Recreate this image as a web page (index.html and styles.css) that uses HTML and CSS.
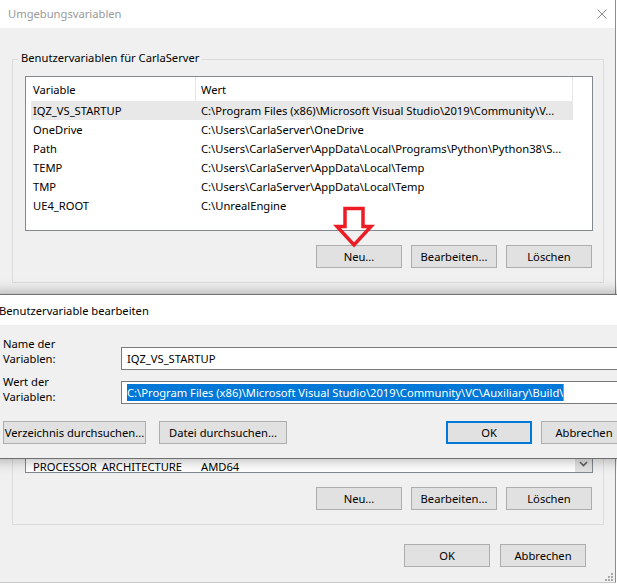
FILE: index.html
```html
<!DOCTYPE html>
<html lang="de">
<head>
<meta charset="utf-8">
<title>Umgebungsvariablen</title>
<link rel="stylesheet" href="styles.css">
</head>
<body>
<div class="window">
  <div class="titlebar">
    <span class="title">Umgebungsvariablen</span>
    <svg class="close" viewBox="0 0 10 10" width="10" height="10"><path d="M0.5 0.5 L9.5 9.5 M9.5 0.5 L0.5 9.5" stroke="#8a8a8a" stroke-width="1" fill="none"/></svg>
  </div>
  <div class="client">
    <section class="group g1">
      <div class="group-title">Benutzervariablen für CarlaServer</div>
      <div class="list">
        <div class="list-head">
          <div class="h h1">Variable</div>
          <div class="h h2">Wert</div>
        </div>
        <div class="row sel"><div class="c1">IQZ_VS_STARTUP</div><div class="c2">C:\Program Files (x86)\Microsoft Visual Studio\2019\Community\V...</div></div>
        <div class="row"><div class="c1">OneDrive</div><div class="c2">C:\Users\CarlaServer\OneDrive</div></div>
        <div class="row"><div class="c1">Path</div><div class="c2">C:\Users\CarlaServer\AppData\Local\Programs\Python\Python38\S...</div></div>
        <div class="row"><div class="c1">TEMP</div><div class="c2">C:\Users\CarlaServer\AppData\Local\Temp</div></div>
        <div class="row"><div class="c1">TMP</div><div class="c2">C:\Users\CarlaServer\AppData\Local\Temp</div></div>
        <div class="row"><div class="c1">UE4_ROOT</div><div class="c2">C:\UnrealEngine</div></div>
      </div>
      <div class="btns">
        <button class="btn">Neu...</button>
        <button class="btn">Bearbeiten...</button>
        <button class="btn">Löschen</button>
      </div>
    </section>

    <section class="group g2">
      <div class="group-title">Systemvariablen</div>
      <div class="list list2">
        <div class="rows2">
          <div class="row last"><div class="c1">PROCESSOR_ARCHITECTURE</div><div class="c2">AMD64</div></div>
        </div>
        <div class="vscroll">
          <div class="sb-down">
            <svg viewBox="0 0 9 6" width="9" height="6"><path d="M1 1 L4.5 4.5 L8 1" stroke="#606060" stroke-width="1.6" fill="none"/></svg>
          </div>
        </div>
      </div>
      <div class="btns">
        <button class="btn">Neu...</button>
        <button class="btn">Bearbeiten...</button>
        <button class="btn">Löschen</button>
      </div>
    </section>

    <div class="footer">
      <button class="btn">OK</button>
      <button class="btn">Abbrechen</button>
    </div>
  </div>

  <svg class="red-arrow" viewBox="0 0 50 52" width="50" height="52">
    <path d="M15 8.5 H33 V26.5 H41 L24 45 L7 26.5 H15 Z" fill="none" stroke="#ed1c24" stroke-width="3.5" stroke-linejoin="miter"/>
  </svg>

  <svg class="grip" viewBox="0 0 9 9" width="9" height="9">
    <rect x="7" y="1" width="2" height="2" fill="#a8a8a8"/>
    <rect x="4" y="4" width="2" height="2" fill="#a8a8a8"/>
    <rect x="7" y="4" width="2" height="2" fill="#a8a8a8"/>
    <rect x="1" y="7" width="2" height="2" fill="#a8a8a8"/>
    <rect x="4" y="7" width="2" height="2" fill="#a8a8a8"/>
    <rect x="7" y="7" width="2" height="2" fill="#a8a8a8"/>
  </svg>
</div>

<div class="dialog">
  <div class="dlg-title">Benutzervariable bearbeiten</div>
  <div class="dlg-body">
    <div class="field f1">
      <div class="lbl">Name der<br>Variablen:</div>
      <div class="tb">IQZ_VS_STARTUP</div>
    </div>
    <div class="field f2">
      <div class="lbl">Wert der<br>Variablen:</div>
      <div class="tb"><span class="selected">C:\Program Files (x86)\Microsoft Visual Studio\2019\Community\VC\Auxiliary\Build\</span></div>
    </div>
    <div class="dlg-btns">
      <button class="btn wide1">Verzeichnis durchsuchen...</button>
      <button class="btn wide2">Datei durchsuchen...</button>
      <button class="btn ok">OK</button>
      <button class="btn cancel">Abbrechen</button>
    </div>
  </div>
</div>
</body>
</html>
```

FILE: styles.css
```css
* { box-sizing: border-box; }
html, body { margin: 0; padding: 0; }
body {
  width: 617px;
  height: 584px;
  overflow: hidden;
  position: relative;
  background: #ffffff;
  font-family: "Noto Sans", "Liberation Sans", sans-serif;
  font-size: 11.2px;
  color: #000;
}

.window {
  position: relative;
  width: 616px;
  height: 583px;
  background: #f0f0f0;
  border-right: 1px solid #8c8c8c;
  border-bottom: 1px solid #c8c8c8;
}

.titlebar {
  height: 28px;
  background: #fff;
  display: flex;
  align-items: center;
  justify-content: space-between;
  padding: 0 8px 0 8px;
  color: #999;
}
.title { line-height: 16px; }
.close { display: block; }

.group {
  margin: 0 11px 0 12px;
  border: 1px solid #dcdcdc;
  padding: 0 10px 14px 12px;
}
.g1 { margin-top: 31px; }
.g2 { margin-top: 18px; }

.group-title {
  width: fit-content;
  margin: -10px 0 0 -7px;
  padding: 0 3px;
  line-height: 16px;
  background: #f0f0f0;
}

.list {
  margin-top: 10px;
  height: 155px;
  border: 1px solid #828790;
  background: #fff;
  overflow: hidden;
}

.list-head {
  display: flex;
  height: 24px;
  flex: none;
}
.h {
  display: flex;
  align-items: center;
  border-right: 1px solid #e5e5e5;
  white-space: nowrap;
}
.h1 { width: 170px; padding-left: 7px; }
.h2 { width: 377px; padding-left: 5px; }

.row {
  display: flex;
  align-items: center;
  height: 19px;
  flex: none;
  margin-left: 5px;
  width: 542px;
  white-space: nowrap;
}
.row.sel { background: #e8e8e8; }
.c1 { width: 164px; padding-left: 2px; flex: none; overflow: hidden; }
.c2 { flex: 1; padding-left: 6px; overflow: hidden; }

.list2 { display: flex; }
.rows2 {
  flex: 1;
  min-width: 0;
  display: flex;
  flex-direction: column;
  justify-content: flex-end;
  overflow: hidden;
}
.rows2 .row { width: 540px; }
.row.last { margin-bottom: -4px; }

.vscroll {
  width: 17px;
  flex: none;
  background: #f0f0f0;
  display: flex;
  flex-direction: column;
  justify-content: flex-end;
}
.sb-down {
  height: 17px;
  background: #e3e3e3;
  display: flex;
  align-items: center;
  justify-content: center;
}
.sb-down svg { display: block; }

.btns {
  display: flex;
  justify-content: flex-end;
  gap: 9px;
  margin-top: 14px;
  padding-right: 1px;
}

.btn {
  width: 86px;
  height: 23px;
  margin: 0;
  padding: 0;
  border: 1px solid #adadad;
  background: #e1e1e1;
  font: inherit;
  color: #000;
  display: flex;
  align-items: center;
  justify-content: center;
  white-space: nowrap;
}

.footer {
  display: flex;
  justify-content: flex-end;
  gap: 10px;
  margin-top: 19px;
  padding-right: 29px;
}

.red-arrow {
  position: absolute;
  left: 330px;
  top: 200px;
  overflow: visible;
}

.grip {
  position: absolute;
  left: 604px;
  top: 572px;
}

/* overlapping edit dialog */
.dialog {
  position: absolute;
  left: -8px;
  top: 294px;
  width: 646px;
  border: 1px solid #6f6f6f;
  background: #f0f0f0;
  box-shadow: 0 0 12px 2px rgba(0, 0, 0, 0.28);
}
.dlg-title {
  height: 30px;
  background: #fff;
  padding-left: 6px;
  display: flex;
  align-items: center;
  white-space: nowrap;
}
.dlg-body {
  padding: 11px 10px 14px 10px;
}
.field {
  display: flex;
  align-items: flex-start;
}
.lbl {
  width: 118px;
  flex: none;
  line-height: 15px;
}
.f1 .tb { margin-top: 11px; }
.f2 { margin-top: 4px; }
.f2 .tb { margin-top: 7px; }
.tb {
  flex: 1;
  height: 23px;
  border: 1px solid #7a7a7a;
  background: #fff;
  padding-left: 5px;
  display: flex;
  align-items: center;
  white-space: nowrap;
  overflow: hidden;
}
.selected {
  background: #0078d7;
  color: #fff;
  line-height: 17px;
  border-right: 1px solid #d08a3a;
}
.dlg-btns {
  display: flex;
  margin-top: 17px;
}
.wide1 { width: 143px; }
.wide2 { width: 128px; margin-left: 13px; }
.ok { margin-left: auto; border: 2px solid #0078d7; }
.cancel { margin-left: 9px; }
```
